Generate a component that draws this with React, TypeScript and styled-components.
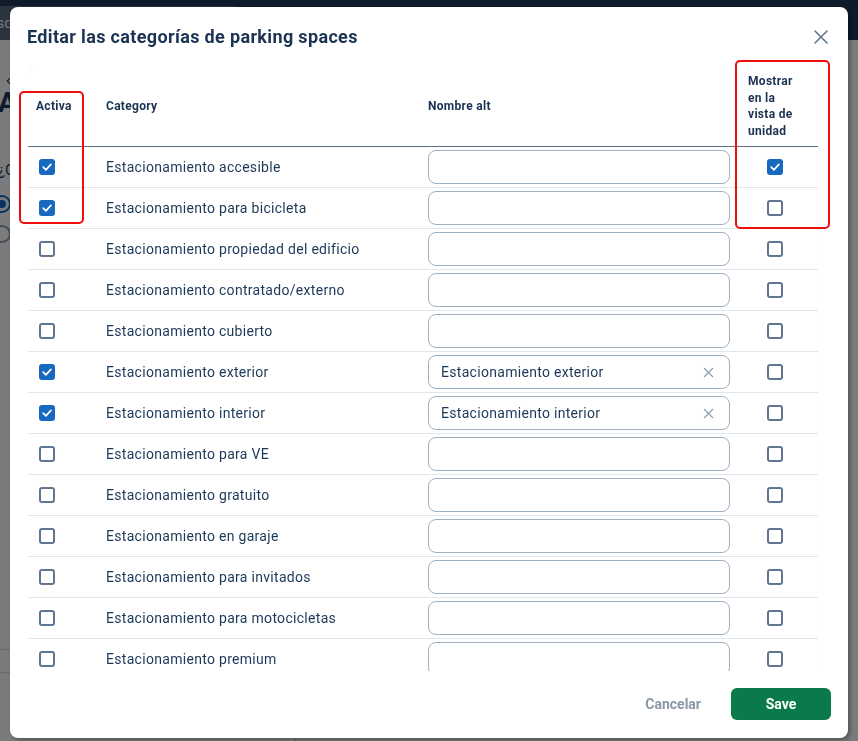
import React from "react";
import styled, { createGlobalStyle } from "styled-components";
import { X, ChevronLeft } from "lucide-react";

const GlobalStyle = createGlobalStyle`
  html, body { margin: 0; padding: 0; }
  body {
    font-family: Roboto, "Noto Sans", "Liberation Sans", sans-serif;
    background: #f4f6f8;
    overflow: hidden;
  }
  * { box-sizing: border-box; }
`;

/* ---------- background page ---------- */
const Page = styled.div`
  width: 858px;
  height: 741px;
  display: flex;
  flex-direction: column;
  background: #f4f6f8;
`;
const TopBar = styled.div`
  height: 57px;
  background: #1d3656;
  display: flex;
  align-items: flex-start;
  padding-top: 6px;
`;
const SearchBox = styled.div`
  margin-left: -25px;
  width: 260px;
  height: 34px;
  background: #55677c;
  color: #e6ebf0;
  font-size: 15px;
  display: flex;
  align-items: center;
  padding-left: 4px;
`;
const PageBody = styled.div`
  flex: 1;
  display: flex;
  flex-direction: column;
  padding: 31px 0 0 2px;
  color: #1d3656;
`;
const BackLink = styled.div`
  display: flex;
  align-items: center;
  height: 20px;
  color: #3b4e63;
`;
const PageHeading = styled.h1`
  margin: -5px 0 0 -4px;
  font-size: 28px;
  font-weight: 700;
  line-height: 34px;
`;
const Question = styled.div`
  margin-top: 41px;
  font-size: 15px;
  margin-left: -4px;
`;
const RadioRow = styled.div`
  margin-top: 18px;
  display: flex;
  align-items: center;
  gap: 8px;
  height: 14px;
  & + & { margin-top: 16px; }
`;
const Radio = styled.span<{ $on?: boolean }>`
  width: 18px;
  height: 18px;
  margin-left: -9px;
  border-radius: 50%;
  border: 2px solid ${(p) => (p.$on ? "#1565c0" : "#8a98a8")};
  display: flex;
  align-items: center;
  justify-content: center;
  &::after {
    content: "";
    width: 8px;
    height: 8px;
    border-radius: 50%;
    background: ${(p) => (p.$on ? "#1565c0" : "transparent")};
  }
`;
const PageCard = styled.div<{ $top: number; $height: number; $openTop?: boolean }>`
  margin-top: ${(p) => p.$top}px;
  height: ${(p) => p.$height}px;
  margin-left: -6px;
  width: 300px;
  flex-shrink: 0;
  background: #f4f6f8;
  border: 1px solid #c9d1da;
  border-top-color: ${(p) => (p.$openTop ? "transparent" : "#c9d1da")};
  border-radius: ${(p) => (p.$openTop ? "0 0 8px 8px" : "8px")};
`;

const Backdrop = styled.div`
  position: fixed;
  inset: 0;
  background: rgba(0, 0, 0, 0.5);
`;

/* ---------- modal ---------- */
const Modal = styled.div`
  position: fixed;
  left: 10px;
  top: 7px;
  width: 838px;
  height: 731px;
  background: #ffffff;
  border-radius: 8px;
  box-shadow: 2px 2px 4px rgba(0, 0, 0, 0.35);
  display: flex;
  flex-direction: column;
  letter-spacing: 0.3px;
`;
const ModalHeader = styled.div`
  height: 59px;
  padding: 18px 14px 0 17px;
  display: flex;
  justify-content: space-between;
  align-items: flex-start;
`;
const Title = styled.h2`
  margin: 0;
  font-size: 18px;
  line-height: 24px;
  font-weight: 700;
  color: #1b3353;
  letter-spacing: 0.35px;
`;
const CloseButton = styled.button`
  border: 0;
  background: none;
  padding: 0;
  margin-top: -1px;
  width: 26px;
  height: 26px;
  display: flex;
  align-items: center;
  justify-content: center;
  color: #5f738a;
  cursor: pointer;
`;
const ScrollArea = styled.div`
  flex: 1;
  min-height: 0;
  margin: 0 8px 0 18px;
  overflow-y: auto;
  scrollbar-width: none;
  &::-webkit-scrollbar { display: none; }
`;
const Table = styled.div`
  width: 790px;
  border-radius: 8px 8px 0 0;
  box-shadow: 0 -1px 1px rgba(0, 0, 0, 0.06);
`;
const cols = "70px 322px 318px 80px";
const HeadRow = styled.div`
  display: grid;
  grid-template-columns: ${cols};
  height: 81px;
  align-items: center;
  border-bottom: 1px solid #5b6f86;
`;
const HeadCell = styled.div<{ $pl: number; $pr?: number }>`
  padding-left: ${(p) => p.$pl}px;
  padding-right: ${(p) => p.$pr ?? 4}px;
  font-size: 12px;
  line-height: 16.5px;
  font-weight: 700;
  color: #1b3353;
`;
const Row = styled.div`
  display: grid;
  grid-template-columns: ${cols};
  height: 41px;
  align-items: center;
  border-bottom: 1px solid #e0e6ed;
`;
const Cell = styled.div<{ $pl: number }>`
  padding-left: ${(p) => p.$pl}px;
  display: flex;
  align-items: center;
`;
const CategoryText = styled.span`
  font-size: 14px;
  color: #1c3859;
  white-space: nowrap;
`;
const Box = styled.span<{ $checked: boolean }>`
  width: 16px;
  height: 16px;
  border-radius: 3px;
  border: ${(p) => (p.$checked ? "0" : "2px solid #5f7590")};
  background: ${(p) => (p.$checked ? "#1769bf" : "#ffffff")};
  display: flex;
  align-items: center;
  justify-content: center;
`;
const InputWrap = styled.div`
  width: 302px;
  height: 34px;
  border: 1px solid #9fb0c3;
  border-radius: 8px;
  display: flex;
  align-items: center;
  padding: 0 12px 0 12px;
  background: #ffffff;
`;
const AltInput = styled.input`
  flex: 1;
  min-width: 0;
  border: 0;
  outline: none;
  background: transparent;
  font-family: inherit;
  font-size: 14px;
  letter-spacing: 0.3px;
  color: #1c3859;
  padding: 0;
`;
const ClearIcon = styled.span`
  display: flex;
  color: #8d9bad;
`;
const Footer = styled.div`
  height: 67px;
  display: flex;
  justify-content: flex-end;
  align-items: center;
  gap: 18px;
  padding: 0 17px 1px 0;
`;
const TextButton = styled.button`
  border: 0;
  background: none;
  padding: 0 12px;
  height: 32px;
  font-family: inherit;
  font-size: 14px;
  font-weight: 700;
  color: #8a97a6;
  cursor: pointer;
`;
const SaveButton = styled.button`
  width: 100px;
  height: 32px;
  border: 0;
  border-radius: 6px;
  background: #0b7a4b;
  color: #ffffff;
  font-family: inherit;
  font-size: 14px;
  font-weight: 700;
  cursor: pointer;
`;
const Annotation = styled.div<{ $l: number; $t: number; $w: number; $h: number }>`
  position: absolute;
  left: ${(p) => p.$l}px;
  top: ${(p) => p.$t}px;
  width: ${(p) => p.$w}px;
  height: ${(p) => p.$h}px;
  border: 2px solid #f20d0d;
  border-radius: 5px;
  pointer-events: none;
`;

const Check = () => (
  <svg width="12" height="12" viewBox="0 0 12 12" fill="none">
    <path d="M2.2 6.2 L4.9 8.8 L9.9 3.4" stroke="#fff" strokeWidth="1.7" strokeLinecap="round" strokeLinejoin="round" />
  </svg>
);

type Item = { name: string; active: boolean; alt: string; show: boolean };

const items: Item[] = [
  { name: "Estacionamiento accesible", active: true, alt: "", show: true },
  { name: "Estacionamiento para bicicleta", active: true, alt: "", show: false },
  { name: "Estacionamiento propiedad del edificio", active: false, alt: "", show: false },
  { name: "Estacionamiento contratado/externo", active: false, alt: "", show: false },
  { name: "Estacionamiento cubierto", active: false, alt: "", show: false },
  { name: "Estacionamiento exterior", active: true, alt: "Estacionamiento exterior", show: false },
  { name: "Estacionamiento interior", active: true, alt: "Estacionamiento interior", show: false },
  { name: "Estacionamiento para VE", active: false, alt: "", show: false },
  { name: "Estacionamiento gratuito", active: false, alt: "", show: false },
  { name: "Estacionamiento en garaje", active: false, alt: "", show: false },
  { name: "Estacionamiento para invitados", active: false, alt: "", show: false },
  { name: "Estacionamiento para motocicletas", active: false, alt: "", show: false },
  { name: "Estacionamiento premium", active: false, alt: "", show: false },
  { name: "Estacionamiento privado", active: false, alt: "", show: false },
  { name: "Estacionamiento público", active: false, alt: "", show: false },
];

const CheckBox = ({ checked }: { checked: boolean }) => (
  <Box $checked={checked}>{checked && <Check />}</Box>
);

export default function App() {
  return (
    <>
      <GlobalStyle />
      <Page>
        <TopBar>
          <SearchBox>Búsqueda</SearchBox>
        </TopBar>
        <PageBody>
          <BackLink>
            <ChevronLeft size={14} strokeWidth={2} />
          </BackLink>
          <PageHeading>Aparcamiento</PageHeading>
          <Question>¿Cuenta con estacionamiento?</Question>
          <RadioRow>
            <Radio $on />
          </RadioRow>
          <RadioRow>
            <Radio />
          </RadioRow>
          <PageCard $top={20} $height={389} $openTop />
          <PageCard $top={22} $height={80} />
        </PageBody>
      </Page>
      <Backdrop />
      <Modal>
        <ModalHeader>
          <Title>Editar las categorías de parking spaces</Title>
          <CloseButton aria-label="Cerrar">
            <X size={24} strokeWidth={1.5} />
          </CloseButton>
        </ModalHeader>
        <ScrollArea>
          <Table>
            <HeadRow>
              <HeadCell $pl={8}>Activa</HeadCell>
              <HeadCell $pl={8}>Category</HeadCell>
              <HeadCell $pl={8}>Nombre alt</HeadCell>
              <HeadCell $pl={10} $pr={18}>Mostrar en la vista de unidad</HeadCell>
            </HeadRow>
            {items.map((it) => (
              <Row key={it.name}>
                <Cell $pl={11}>
                  <CheckBox checked={it.active} />
                </Cell>
                <Cell $pl={8}>
                  <CategoryText>{it.name}</CategoryText>
                </Cell>
                <Cell $pl={8}>
                  <InputWrap>
                    <AltInput defaultValue={it.alt} />
                    {it.alt && (
                      <ClearIcon>
                        <X size={17} strokeWidth={1.5} />
                      </ClearIcon>
                    )}
                  </InputWrap>
                </Cell>
                <Cell $pl={29}>
                  <CheckBox checked={it.show} />
                </Cell>
              </Row>
            ))}
          </Table>
        </ScrollArea>
        <Footer>
          <TextButton>Cancelar</TextButton>
          <SaveButton>Save</SaveButton>
        </Footer>
        <Annotation $l={9} $t={84} $w={65} $h={133} />
        <Annotation $l={725} $t={53} $w={95} $h={169} />
      </Modal>
    </>
  );
}
